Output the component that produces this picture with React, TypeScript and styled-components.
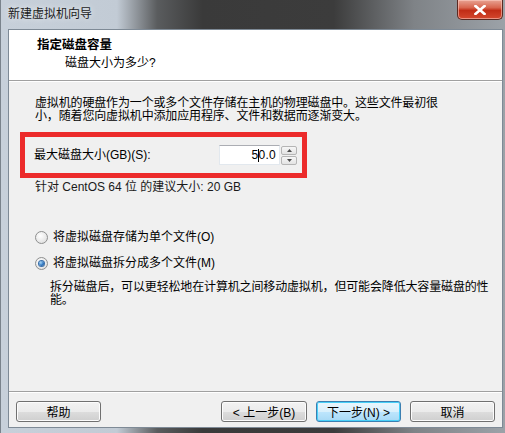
import React from "react";
import styled, { createGlobalStyle, css } from "styled-components";

const GlobalStyle = createGlobalStyle`
  html, body {
    margin: 0;
    padding: 0;
    background: #ffffff;
  }
  * {
    box-sizing: border-box;
  }
`;

const uiFont = `"Liberation Sans", "Noto Sans CJK SC", sans-serif`;

const Window = styled.div`
  width: 505px;
  height: 433px;
  display: flex;
  flex-direction: column;
  padding: 0 2px 5px 7px;
  font-family: ${uiFont};
  font-size: 12px;
  color: #000;
  background: linear-gradient(
    90deg,
    #c7d0da 0%,
    #c2cbd5 23%,
    #5a5c5e 31%,
    #3a3a3a 40%,
    #3c3c3c 66%,
    #7f8387 82%,
    #9ca2a8 100%
  );
  border-left: 1px solid #7a838c;
`;

const TitleBar = styled.div`
  height: 29px;
  flex: none;
  display: flex;
  align-items: flex-start;
  justify-content: space-between;
  margin-left: -7px;
  margin-right: -2px;
  padding-left: 7px;
`;

const TitleText = styled.span`
  margin-top: 7px;
  font-size: 12px;
  line-height: 14px;
  color: #1b1b1b;
  text-shadow: 0 0 6px rgba(255, 255, 255, 0.8);
`;

const CloseButton = styled.div`
  width: 46px;
  height: 20px;
  margin-right: 2px;
  display: flex;
  align-items: center;
  justify-content: center;
  border: 1px solid #5b2a22;
  border-top: none;
  border-radius: 0 0 5px 5px;
  background: linear-gradient(
    180deg,
    #e8a393 0%,
    #d8664f 40%,
    #c12d16 55%,
    #d4482e 100%
  );
  box-shadow: inset 0 0 0 1px rgba(255, 210, 200, 0.55);
`;

const Client = styled.div`
  flex: 1;
  display: flex;
  flex-direction: column;
  background: #f0f0f0;
  border: 1px solid #7e8a96;
`;

const Header = styled.div`
  flex: none;
  height: 51px;
  background: #ffffff;
  border-bottom: 1px solid #a0a0a0;
  padding: 8px 0 0 28px;
`;

const HeaderTitle = styled.div`
  font-weight: bold;
  font-size: 12.5px;
  line-height: 15px;
`;

const HeaderSub = styled.div`
  margin-top: 3px;
  padding-left: 28px;
  line-height: 14px;
`;

const Body = styled.div`
  flex: 1;
  display: flex;
  flex-direction: column;
  padding: 15px 0 0 11px;
  border-top: 1px solid #ffffff;
`;

const Paragraph = styled.p<{ $indent?: number }>`
  margin: 0;
  padding-left: ${(p) => p.$indent ?? 15}px;
  line-height: 13px;
  letter-spacing: -0.15px;
  width: 484px;
`;

const Line = styled.span`
  display: block;
  white-space: nowrap;
`;

const HighlightBox = styled.div`
  margin-top: 9px;
  width: 287px;
  height: 46px;
  border: 5px solid #ec2b2b;
  display: flex;
  align-items: center;
  padding: 0 0 0 9px;
`;

const FieldLabel = styled.span`
  flex: 1;
  line-height: 14px;
`;

const SpinBox = styled.div`
  display: flex;
  align-items: center;
  gap: 1px;
  margin-right: 5px;
`;

const NumberField = styled.div`
  width: 61px;
  height: 20px;
  background: #ffffff;
  border: 1px solid #e2e8ee;
  border-top-color: #abadb3;
  display: flex;
  align-items: center;
  justify-content: flex-end;
  padding-right: 3px;
  font-size: 12px;
  letter-spacing: 0.3px;
`;

const Caret = styled.span`
  display: inline-block;
  width: 1px;
  height: 13px;
  background: #000;
  margin: 0 -1px 0 0;
  vertical-align: middle;
`;

const SpinButtons = styled.div`
  display: flex;
  flex-direction: column;
  gap: 1px;
`;

const SpinButton = styled.div`
  width: 16px;
  height: 9px;
  border: 1px solid #b5b5b5;
  border-radius: 2px;
  background: linear-gradient(180deg, #f7f7f7 0%, #e3e3e3 100%);
  display: flex;
  align-items: center;
  justify-content: center;
`;

const Hint = styled.p`
  margin: 2px 0 0 15px;
  line-height: 14px;
  color: #1a1a1a;
`;

const RadioRow = styled.label<{ $gap: number }>`
  display: flex;
  align-items: center;
  gap: 5px;
  height: 16px;
  margin: ${(p) => p.$gap}px 0 0 15px;
  line-height: 16px;
`;

const RadioCircle = styled.span<{ $checked?: boolean }>`
  width: 13px;
  height: 13px;
  border-radius: 50%;
  border: 1px solid #8e8f8f;
  background: radial-gradient(circle at 40% 35%, #ffffff 0%, #e4e4e4 70%, #d2d2d2 100%);
  display: flex;
  align-items: center;
  justify-content: center;
  ${(p) =>
    p.$checked &&
    css`
      &::after {
        content: "";
        width: 5px;
        height: 5px;
        border-radius: 50%;
        background: radial-gradient(circle at 35% 35%, #a8d6f5 0%, #2f78c4 55%, #1b3f73 100%);
        box-shadow: 0 0 0 1px #3a6fa8;
      }
    `}
`;

const Description = styled(Paragraph)`
  margin-top: 10px;
`;

const Footer = styled.div`
  flex: none;
  display: flex;
  align-items: center;
  justify-content: space-between;
  padding: 9px 7px 5px 7px;
  border-top: 1px solid #a0a0a0;
  box-shadow: inset 0 1px 0 #ffffff;
`;

const ButtonGroup = styled.div`
  display: flex;
  gap: 9px;
`;

const DialogButton = styled.button<{ $default?: boolean; $w?: number }>`
  width: ${(p) => p.$w ?? 85}px;
  height: 21px;
  padding: 0;
  font-family: ${uiFont};
  font-size: 12px;
  color: #000;
  border: 1px solid #707070;
  border-radius: 3px;
  background: linear-gradient(180deg, #f2f2f2 0%, #ebebeb 50%, #dddddd 51%, #cfcfcf 100%);
  box-shadow: inset 0 0 0 1px #fcfcfc;
  ${(p) =>
    p.$default &&
    css`
      border-color: #3c7fb1;
      background: linear-gradient(180deg, #eaf6fd 0%, #d9f0fc 50%, #bee6fd 51%, #a7d9f5 100%);
      box-shadow: inset 0 0 0 1px #48d0f8;
    `}
`;

const App: React.FC = () => (
  <>
    <GlobalStyle />
    <Window>
      <TitleBar>
        <TitleText>新建虚拟机向导</TitleText>
        <CloseButton>
          <svg width="12" height="10" viewBox="0 0 12 10">
            <path
              d="M1.5 1 L10.5 9 M10.5 1 L1.5 9"
              stroke="#ffffff"
              strokeWidth="2.6"
              strokeLinecap="square"
            />
          </svg>
        </CloseButton>
      </TitleBar>
      <Client>
        <Header>
          <HeaderTitle>指定磁盘容量</HeaderTitle>
          <HeaderSub>磁盘大小为多少?</HeaderSub>
        </Header>
        <Body>
          <Paragraph>
            <Line>虚拟机的硬盘作为一个或多个文件存储在主机的物理磁盘中。这些文件最初很</Line>
            <Line>小，随着您向虚拟机中添加应用程序、文件和数据而逐渐变大。</Line>
          </Paragraph>
          <HighlightBox>
            <FieldLabel>最大磁盘大小(GB)(S):</FieldLabel>
            <SpinBox>
              <NumberField>
                5<Caret />0.0
              </NumberField>
              <SpinButtons>
                <SpinButton>
                  <svg width="5" height="3" viewBox="0 0 5 3">
                    <path d="M0 3 L2.5 0 L5 3 Z" fill="#4d4d4d" />
                  </svg>
                </SpinButton>
                <SpinButton>
                  <svg width="5" height="3" viewBox="0 0 5 3">
                    <path d="M0 0 L2.5 3 L5 0 Z" fill="#4d4d4d" />
                  </svg>
                </SpinButton>
              </SpinButtons>
            </SpinBox>
          </HighlightBox>
          <Hint>针对 CentOS 64 位 的建议大小: 20 GB</Hint>
          <RadioRow $gap={35}>
            <RadioCircle />
            将虚拟磁盘存储为单个文件(O)
          </RadioRow>
          <RadioRow $gap={10}>
            <RadioCircle $checked />
            将虚拟磁盘拆分成多个文件(M)
          </RadioRow>
          <Description $indent={30}>
            <Line>拆分磁盘后，可以更轻松地在计算机之间移动虚拟机，但可能会降低大容量磁盘的性</Line>
            <Line>能。</Line>
          </Description>
        </Body>
        <Footer>
          <DialogButton>帮助</DialogButton>
          <ButtonGroup>
            <DialogButton $w={86}>&lt; 上一步(B)</DialogButton>
            <DialogButton $default>下一步(N) &gt;</DialogButton>
            <DialogButton>取消</DialogButton>
          </ButtonGroup>
        </Footer>
      </Client>
    </Window>
  </>
);

export default App;
